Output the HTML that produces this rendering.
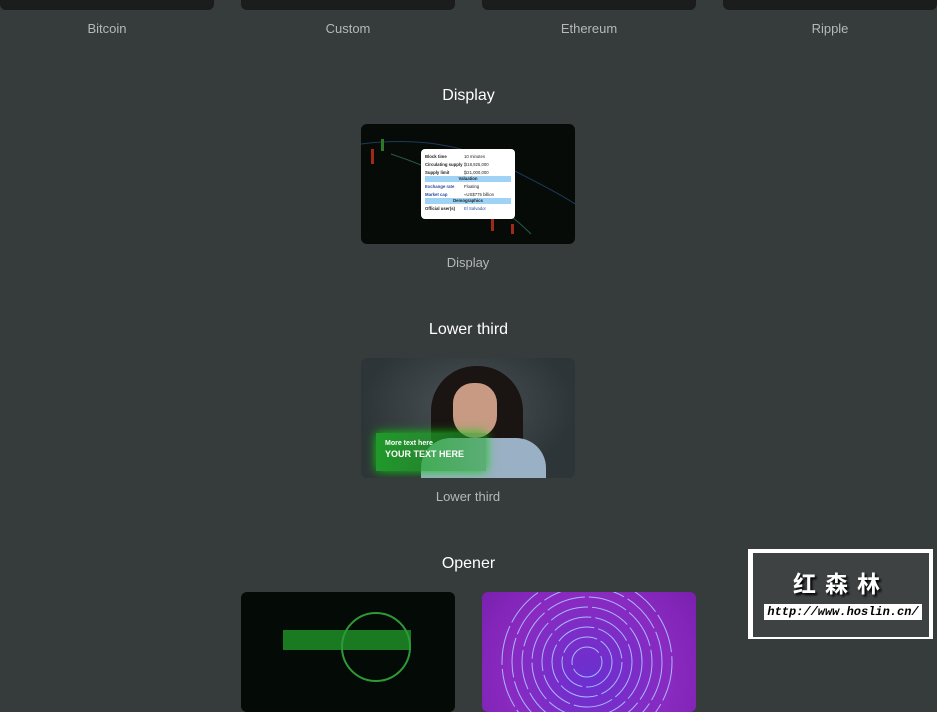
<!DOCTYPE html>
<html><head><meta charset="utf-8"><style>
*{margin:0;padding:0;box-sizing:border-box}
body{width:937px;height:642px;overflow:hidden;background:#363b3b;font-family:"Liberation Sans",sans-serif;position:relative}
.card{position:absolute;width:214px;height:120px;border-radius:6px;overflow:hidden}
.lbl{position:absolute;width:214px;text-align:center;color:#b4b8b8;font-size:13px}
.h{position:absolute;width:937px;left:0;text-align:center;color:#fff;font-size:16px}
.row{display:flex;font-size:4.3px;padding:0 4px;height:8px;align-items:center;color:#222;font-weight:bold;white-space:nowrap}
.row span:first-child{width:39px}
.row span+span{font-weight:normal}
.bar{background:#9fd3f5;text-align:center;font-size:4.3px;height:6px;line-height:6px;margin:0 4px;font-weight:bold;color:#222}
</style></head><body>
<div class="card" style="left:0;top:-110px;background:#1b1c1c"></div>
<div class="card" style="left:241px;top:-110px;background:#1b1c1c"></div>
<div class="card" style="left:482px;top:-110px;background:#1b1c1c"></div>
<div class="card" style="left:723px;top:-110px;background:#1b1c1c"></div>
<div class="lbl" style="left:0;top:21px">Bitcoin</div>
<div class="lbl" style="left:241px;top:21px">Custom</div>
<div class="lbl" style="left:482px;top:21px">Ethereum</div>
<div class="lbl" style="left:723px;top:21px">Ripple</div>

<div class="h" style="top:87px">Display</div>
<div class="card" style="left:361px;top:124px;background:#060b08">
<svg width="214" height="120" style="position:absolute;left:0;top:0"><path d="M0 20 Q80 10 140 40 T214 80" stroke="#1d3a5a" fill="none"/><path d="M30 30 Q120 60 170 110" stroke="#2a5a4a" fill="none"/><rect x="10" y="25" width="3" height="15" fill="#a02a1a"/><rect x="20" y="15" width="3" height="12" fill="#2a7a2a"/><rect x="130" y="95" width="3" height="12" fill="#a02a1a"/><rect x="150" y="100" width="3" height="10" fill="#a02a1a"/></svg>
<div style="position:absolute;left:60px;top:25px;width:94px;height:70px;background:#fff;border-radius:4px;padding-top:3px">
<div class="row"><span>Block time</span><span>10 minutes</span></div>
<div class="row"><span>Circulating supply</span><span>₿18,925,000</span></div>
<div class="row"><span>Supply limit</span><span>₿21,000,000</span></div>
<div class="bar">Valuation</div>
<div class="row" style="color:#2a4a9a"><span>Exchange rate</span><span style="color:#222">Floating</span></div>
<div class="row" style="color:#2a4a9a"><span>Market cap</span><span style="color:#222">≈US$775 billion</span></div>
<div class="bar">Demographics</div>
<div class="row"><span>Official user(s)</span><span style="color:#2a4a9a">El Salvador</span></div>
</div></div>
<div class="lbl" style="left:361px;top:255px">Display</div>

<div class="h" style="top:321px">Lower third</div>
<div class="card" style="left:361px;top:358px;background:radial-gradient(ellipse at 50% 40%,#4a5256,#2e3538 70%)">
<div style="position:absolute;left:70px;top:8px;width:92px;height:115px;background:#1a1412;border-radius:45px 45px 10px 10px"></div>
<div style="position:absolute;left:92px;top:25px;width:44px;height:55px;background:#c89a84;border-radius:22px 22px 24px 24px"></div>
<div style="position:absolute;left:60px;top:80px;width:125px;height:45px;background:#9ab0c4;border-radius:30px 30px 0 0"></div>
<div style="position:absolute;left:15px;top:75px;width:110px;height:38px;background:linear-gradient(90deg,rgba(30,170,40,.85),rgba(30,170,40,.5));box-shadow:0 0 10px #1c1"></div>
<div style="position:absolute;left:24px;top:82px;color:#fff;font-size:7px;font-weight:bold">More text here</div>
<div style="position:absolute;left:24px;top:91px;color:#fff;font-size:9px;font-weight:bold">YOUR TEXT HERE</div>
</div>
<div class="lbl" style="left:361px;top:489px">Lower third</div>

<div class="h" style="top:555px">Opener</div>
<div class="card" style="left:241px;top:592px;background:#040a06">
<div style="position:absolute;left:42px;top:38px;width:128px;height:20px;background:#1a7a22"></div>
<div style="position:absolute;left:100px;top:20px;width:70px;height:70px;border-radius:50%;border:2px solid #2c9a36"></div>
</div>
<div class="card" style="left:482px;top:592px;background:radial-gradient(circle at 50% 70%,#6a30d0,#8a2ac0 60%,#7a20b0)">
<svg width="214" height="120" style="position:absolute;left:0;top:0" fill="none" stroke="#a8b8ff" stroke-width="1" stroke-dasharray="40 4"><circle cx="105" cy="70" r="15"/><circle cx="105" cy="70" r="25"/><circle cx="105" cy="70" r="35"/><circle cx="105" cy="70" r="45"/><circle cx="105" cy="70" r="55"/><circle cx="105" cy="70" r="65"/><circle cx="105" cy="70" r="75"/><circle cx="105" cy="70" r="85"/></svg>
</div>

<div style="position:absolute;left:748px;top:549px;width:185px;height:90px;background:#fff"></div>
<div style="position:absolute;left:753px;top:553px;width:176px;height:84px;background:#3e4243"></div>
<div style="position:absolute;left:753px;top:565px;width:176px;text-align:center;color:#fff;font-size:23px;font-weight:bold;letter-spacing:9px;font-family:'Noto Sans CJK SC',sans-serif;text-shadow:2px 2px 2px #000">红森林</div>
<div style="position:absolute;left:764px;top:604px;width:158px;height:16px;background:#fff;color:#000;font-size:12px;font-style:italic;font-weight:bold;text-align:center;line-height:16px;font-family:'Liberation Mono',monospace">http://www.hoslin.cn/</div>
</body></html>
